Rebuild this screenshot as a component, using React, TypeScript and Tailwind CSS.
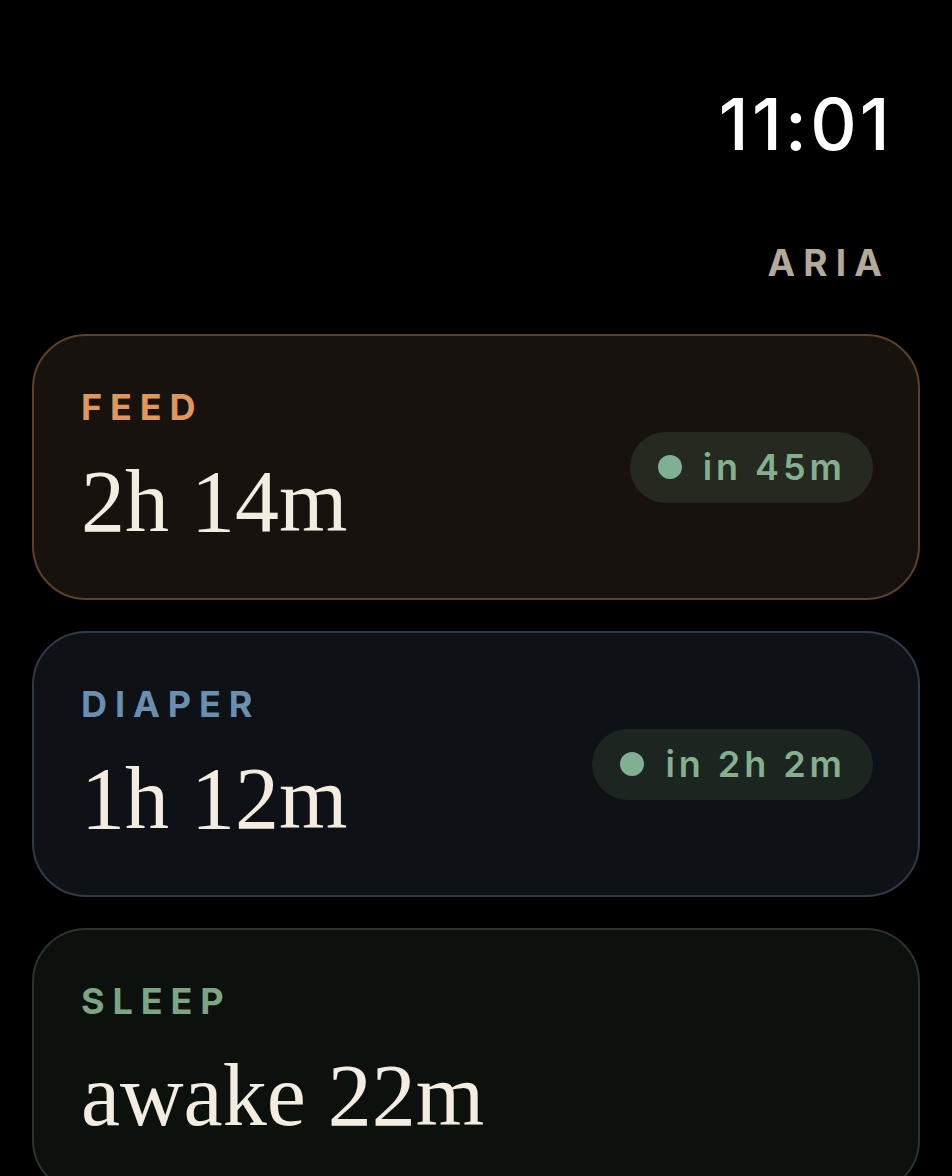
import type { ReactNode } from 'react';

type Card = {
  label: string;
  value: string;
  labelClass: string;
  cardClass: string;
  pill?: { text: string; bg: string };
};

const cards: Card[] = [
  {
    label: 'FEED',
    value: '2h 14m',
    labelClass: 'text-[#e0975b]',
    cardClass: 'bg-[#17120e] border-[#5c4027]',
    pill: { text: 'in 45m', bg: 'bg-[#252920]' },
  },
  {
    label: 'DIAPER',
    value: '1h 12m',
    labelClass: 'text-[#6a8fb0]',
    cardClass: 'bg-[#0e1115] border-[#2e3b46]',
    pill: { text: 'in 2h 2m', bg: 'bg-[#1d2521]' },
  },
  {
    label: 'SLEEP',
    value: 'awake 22m',
    labelClass: 'text-[#7ea583]',
    cardClass: 'bg-[#0c110e] border-[#2a332d]',
  },
];

function Pill({ children, bg }: { children: ReactNode; bg: string }) {
  return (
    <div className={`flex h-[71px] items-center gap-[21px] rounded-full pl-[28px] pr-[27px] ${bg}`}>
      <span className="h-[24px] w-[24px] rounded-full bg-[#80b091]" />
      <span className="font-['Inter',sans-serif] text-[36px] leading-none font-semibold tracking-[0.11em] text-[#84b08f]">
        {children}
      </span>
    </div>
  );
}

function StatusCard({ card }: { card: Card }) {
  return (
    <div
      className={`flex h-[266px] shrink-0 items-center justify-between rounded-[54px] border-2 pl-[47px] pr-[45px] ${card.cardClass}`}
    >
      <div className="flex flex-col self-start pt-[53px]">
        <span
          className={`font-['Inter',sans-serif] text-[36px] leading-none font-bold tracking-[0.22em] ${card.labelClass}`}
        >
          {card.label}
        </span>
        <span className="mt-[33px] font-['Liberation_Serif',serif] text-[88px] leading-none text-[#f2ece1]">
          {card.value}
        </span>
      </div>
      {card.pill && <Pill bg={card.pill.bg}>{card.pill.text}</Pill>}
    </div>
  );
}

export default function App() {
  return (
    <div className="flex h-[1176px] w-full flex-col overflow-hidden bg-black">
      <header className="flex flex-col items-end pr-[59px] pt-[88px]">
        <span className="font-['Inter',sans-serif] text-[72px] leading-none font-medium tracking-[0.045em] text-white">
          11:01
        </span>
        <span className="mt-[84px] mr-[3px] font-['Inter',sans-serif] text-[37px] leading-none font-bold tracking-[0.22em] text-[#b4aa99]">
          ARIA
        </span>
      </header>
      <main className="mt-[53px] flex flex-col gap-[31px] px-[32px]">
        {cards.map((c) => (
          <StatusCard key={c.label} card={c} />
        ))}
      </main>
    </div>
  );
}
